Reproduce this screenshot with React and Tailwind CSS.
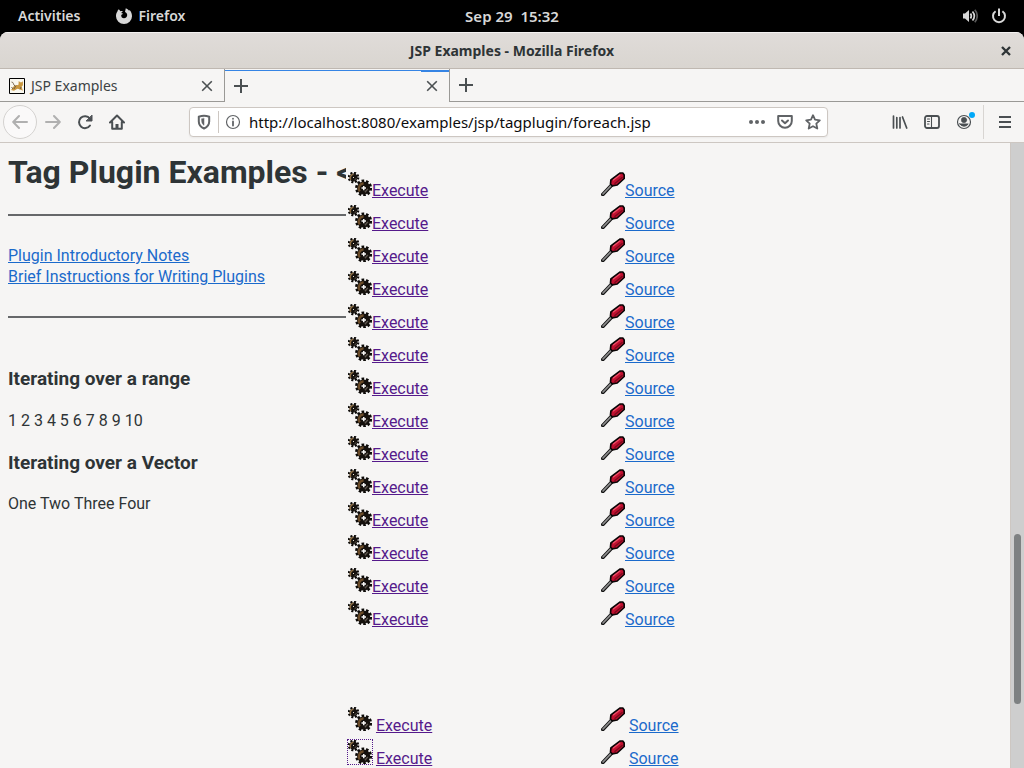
import React from 'react';

const executeRows = Array.from({ length: 14 }, (_, i) => i);

function Gear({ cx, cy, r, dash, fill }) {
  return (
    <g>
      <circle cx={cx} cy={cy} r={r - 1.3} fill="none" stroke="#0c0a08" strokeWidth="2.6" strokeDasharray={dash} />
      <circle cx={cx} cy={cy} r={r - 1.9} fill="#15110d" />
      <path d={`M${cx - r * 0.45} ${cy + r * 0.4}A${r * 0.6} ${r * 0.6} 0 0 1 ${cx} ${cy - r * 0.55}`} stroke={fill} strokeWidth={r * 0.27} fill="none" />
      <path d={`M${cx + r * 0.15} ${cy + r * 0.5}L${cx + r * 0.5} ${cy + r * 0.1}`} stroke="#5d564e" strokeWidth={r * 0.16} />
    </g>
  );
}

function Gears({ className = '' }) {
  return (
    <svg viewBox="0 0 24 24" className={`inline size-6 align-baseline ${className}`} aria-hidden="true">
      <Gear cx={5.5} cy={5.5} r={5.8} dash="1.9 1.630" fill="#8c6d43" />
      <Gear cx={15.6} cy={16} r={8.5} dash="2.6 1.925" fill="#6b4c29" />
      <path d="M15 14h1.500v1.300h1.500v1.500h-1.500V18.200H15v-1.400h-1.500v-1.500H15z" fill="#f6f5f4" />
      <path d="M5 5h1v1H5z" fill="#e8e0d2" />
    </svg>
  );
}

function Screwdriver() {
  return (
    <svg viewBox="0 0 24 24" className="inline size-6 align-baseline" aria-hidden="true">
      <path d="M1.800 22.500L11 12.800" stroke="#151515" strokeWidth="3.600" strokeLinecap="round" />
      <path d="M2 22L11 12.700" stroke="#8d8d8d" strokeWidth="1.700" strokeLinecap="round" />
      <path d="M19.200 1h2.600l1.400 2v3.500l-7 6.500-5 .8-1.700-1.800.4-4z" fill="#c01030" stroke="#0b0506" strokeWidth="1.700" strokeLinejoin="round" />
      <path d="M12 8.300l7.200-5.500" stroke="#ee5068" strokeWidth="1.300" />
      <path d="M13.500 11.800l8-6.500" stroke="#780a1c" strokeWidth="1.300" />
    </svg>
  );
}

function Cross({ className, width = 1.6 }) {
  return (
    <svg viewBox="0 0 12 12" className={className} aria-hidden="true">
      <path d="M1.2 1.2l9.6 9.6M10.8 1.2l-9.6 9.6" stroke="currentColor" strokeWidth={width} />
    </svg>
  );
}

function Plus() {
  return (
    <svg viewBox="0 0 14 14" className="size-[14px]" aria-hidden="true">
      <path d="M7 0v14M0 7h14" stroke="currentColor" strokeWidth="2" />
    </svg>
  );
}

function Icon({ children, className = 'size-4' }) {
  return (
    <svg viewBox="0 0 16 16" fill="none" stroke="currentColor" strokeWidth="2" strokeLinecap="round" strokeLinejoin="round" className={className} aria-hidden="true">
      {children}
    </svg>
  );
}

function TopBar() {
  return (
    <header className="grid h-8 shrink-0 grid-cols-3 items-center bg-black text-sm leading-5 font-semibold text-[#d8d8d8]">
      <div className="flex items-center pl-[18px]">
        <button type="button">Activities</button>
        <button type="button" className="ml-9 flex items-center gap-[6px]">
          <svg viewBox="0 0 16 16" className="size-4" aria-hidden="true">
            <path fill="currentColor" d="M2.800 1.300L4.500 3.200c.8-.3 1.600-.3 2.500 0-.9.4-1.500.9-1.700 1.800l1.900.8-2 1.200c-.2 2 1 3.300 2.800 3.300 1.900 0 3.200-1.400 3.200-3.200 0-1.500-.9-2.500-2.200-3.100L9.800.2c1.400.5 2.300 1.300 3 2.300l1-.3C15.300 3.900 16 5.800 16 8.200a8 7.700 0 0 1-16 0c0-2 .5-3.500 1.400-4.700.1-.9.600-1.700 1.400-2.200z" />
          </svg>
          Firefox
        </button>
      </div>
      <time className="text-center text-[15px] whitespace-pre">{'Sep 29  15:32'}</time>
      <div className="flex items-center justify-end gap-[13px] pr-[17px]">
        <button type="button" aria-label="Volume">
          <svg viewBox="0 0 16 16" className="size-4" fill="none" stroke="currentColor" aria-hidden="true">
            <path d="M1 5.500h2L7 2v12L3 10.500H1z" fill="currentColor" stroke="none" />
            <path d="M8.500 5.500c1 1.500 1 3.500 0 5" strokeWidth="1.700" />
            <path d="M10.500 3.500c2.300 2.800 2.300 6.200 0 9" strokeWidth="1.700" />
            <path d="M12.800 1.800c3.200 3.600 3.200 8.800 0 12.400" stroke="#5a5a5a" strokeWidth="1.700" />
          </svg>
        </button>
        <button type="button" aria-label="Power">
          <svg viewBox="0 0 16 16" className="size-4" fill="none" stroke="currentColor" strokeWidth="2" aria-hidden="true">
            <path d="M8 .5v7.500M4.600 3.200a6 6 0 1 0 6.800 0" />
          </svg>
        </button>
      </div>
    </header>
  );
}

function Tabs() {
  return (
    <div className="flex h-[33px] shrink-0 text-[#4b5052]">
      <div className="flex w-[225px] items-center border-r border-b border-[#9a9996] pt-px pr-[11px] pl-[9px]">
        <svg viewBox="0 0 16 16" className="size-4" aria-hidden="true">
          <path d="M.5.500h15v15H.500z" fill="#faf8f0" stroke="#000" />
          <path d="M2 12c1.500-1 1.500-3.500 4-4.500 1.500-.6 2.500-.2 3.500-.8l.2-3.700 1.500 1.300h1.500l1.200-1v4l-1.300 1.400 1.300 4-3-1.500-2.500-.5L5 12.700z" fill="#c9973f" />
          <path d="M2.500 4c2.500 0 1.500 3 3.500 4M4 11l-1.500-2M7 7.500L5 11M12 9l-1 2.500" stroke="#6c5b42" strokeWidth=".9" fill="none" />
        </svg>
        <span className="ml-[6px] flex-1 text-sm text-[#3d4345]">JSP Examples</span>
        <button type="button" aria-label="Close tab"><Cross className="size-3" /></button>
      </div>
      <div className="flex w-[224px] flex-col pt-px">
        <div className="flex h-[2px] items-start">
          <span className="h-px w-[196px] bg-[#3584e4]" />
          <span className="h-full flex-1 bg-[#3584e4]" />
        </div>
        <div className="flex h-[27px] items-center justify-between pr-[11px] pl-[9px]">
          <Plus />
          <button type="button" aria-label="Close tab"><Cross className="size-3" /></button>
        </div>
      </div>
      <div className="flex flex-1 items-center border-b border-l border-[#9a9996] pl-[9px]">
        <button type="button" aria-label="New tab"><Plus /></button>
      </div>
    </div>
  );
}

function Toolbar() {
  return (
    <div className="flex h-[41px] shrink-0 items-center border-b border-[#cdc7c2] pr-[11px] pl-[3px] text-[#4a4f52]">
      <button type="button" aria-label="Back" className="flex size-[34px] items-center justify-center rounded-full border border-[#d4d2d0] bg-[#faf9f9] text-[#b0b0b0]">
        <Icon><path d="M15 8H1.500M7 2L1.200 8 7 14" /></Icon>
      </button>
      <button type="button" aria-label="Forward" className="ml-2 text-[#b0b0b0]">
        <Icon><path d="M1 8h13.500M9 2l5.800 6L9 14" /></Icon>
      </button>
      <button type="button" aria-label="Reload" className="ml-4">
        <Icon><path d="M12.800 4.500A6 6 0 1 0 13 11.500" /><path d="M15 1.500V7H9.500z" fill="currentColor" strokeWidth="1" /></Icon>
      </button>
      <button type="button" aria-label="Home" className="ml-4">
        <Icon><path d="M1 8.500L8 1.500l7 7M3.200 8v6.800h9.600V8" /><path d="M8 14v-4" strokeWidth="3" strokeLinecap="butt" /></Icon>
      </button>
      <div className="ml-16 flex h-[30px] flex-1 items-center rounded border border-[#cdc7c2] bg-white pr-[6px] pl-[6px] text-[#606366] shadow-xs">
        <Icon><path d="M8 1.700c2 0 3.700.5 5.200 1.100v4.700c0 3.500-2.200 5.700-5.200 7-3-1.300-5.200-3.500-5.200-7V2.800C4.300 2.200 6 1.700 8 1.700z" /><path d="M8 4.500v6.800C6 9.800 5.600 8.500 5.600 5z" fill="currentColor" strokeWidth=".5" /></Icon>
        <span className="ml-[6px] h-[22px] w-px bg-[#cdc7c2]" />
        <Icon className="ml-[6px] size-4"><circle cx="8" cy="8" r="6.500" strokeWidth="1.200" /><path d="M8 7.500v4M8 4.700v.1" strokeWidth="1.800" /></Icon>
        <input aria-label="Address" type="text" defaultValue="http://localhost:8080/examples/jsp/tagplugin/foreach.jsp" className="ml-2 min-w-0 flex-1 bg-transparent text-[15px] leading-6 text-[#0c0c0d] outline-none" />
        <button type="button" aria-label="Page actions"><Icon><path d="M2 8h.01M8 8h.01M14 8h.01" strokeWidth="4" /></Icon></button>
        <button type="button" aria-label="Save to Pocket" className="ml-3"><Icon><path d="M1.200 2h13.600v5a6.800 6.800 0 0 1-13.600 0zM5 6.500l3 2.800 3-2.800" /></Icon></button>
        <button type="button" aria-label="Bookmark" className="ml-3"><Icon><path d="M8 1.200l2 4.500 4.800.6-3.500 3.300 1 4.900L8 12.200l-4.300 2.300 1-4.900L1.200 6.300 6 5.700z" strokeWidth="1.800" /></Icon></button>
      </div>
      <button type="button" aria-label="Library" className="ml-16"><Icon><path d="M1.500 2v12M4.800 3.500V14M8 3.500V14M10.500 3l4.200 11" strokeWidth="1.700" /></Icon></button>
      <button type="button" aria-label="Sidebar" className="ml-4"><Icon><rect x="1" y="2" width="14" height="12" rx="2" strokeWidth="1.800" /><path d="M7.500 2v12M3.500 5h2M3.500 7.500h2M3.500 10h1.500" strokeWidth="1.100" /></Icon></button>
      <button type="button" aria-label="Account" className="relative ml-4">
        <Icon><circle cx="8" cy="8" r="6.500" strokeWidth="1.200" /><circle cx="8" cy="6" r="2.700" fill="currentColor" strokeWidth=".5" /><path d="M3.800 10h8.400a5 5 0 0 1-8.400 0z" fill="currentColor" strokeWidth="1" /></Icon>
        <span className="absolute top-[-2px] right-[-3px] size-[6px] rounded-full bg-[#00a8f8]" />
      </button>
      <span className="ml-[11px] h-[34px] w-px bg-[#d8d5d2]" />
      <button type="button" aria-label="Menu" className="ml-[13px]"><Icon><path d="M2 3h12M2 8h12M2 13h12" strokeLinecap="butt" /></Icon></button>
    </div>
  );
}

function ExampleRow({ spaced = false, focused = false }) {
  return (
    <tr className="align-top">
      <td className="h-[33px] w-[253px] p-0 pl-[2px]">
        <a href="#execute" className="text-[#551a8b]">
          <Gears className={focused ? 'outline-1 outline-dotted outline-[#551a8b]' : ''} />
          {spaced && ' '}
          <span className="underline">Execute</span>
        </a>
      </td>
      <td className="h-[33px] p-0 pl-[2px]">
        <a href="#source" className="text-[#1b6acb]">
          <Screwdriver />
          {spaced && ' '}
          <span className="underline">Source</span>
        </a>
      </td>
    </tr>
  );
}

export default function App() {
  return (
    <div className="flex h-screen flex-col overflow-hidden bg-black font-['Noto_Sans',sans-serif]">
      <TopBar />
      <div className="flex min-h-0 flex-1 flex-col overflow-hidden rounded-t-lg bg-[#f6f5f4]">
        <div className="grid h-[37px] shrink-0 grid-cols-[1fr_auto_1fr] items-center border-t border-b border-t-[#f4f2f1] border-b-[#bfb8b1] bg-linear-to-b from-[#e0dcd9] to-[#d9d5d0] text-[#2e3436]">
          <h1 className="col-start-2 text-sm font-bold">JSP Examples - Mozilla Firefox</h1>
          <button type="button" aria-label="Close window" className="mr-[13px] justify-self-end"><Cross className="size-[10px]" width={2.8} /></button>
        </div>
        <Tabs />
        <Toolbar />
        <div className="flex min-h-0 flex-1 font-[Roboto,sans-serif] text-base leading-[21px] text-[#2e3436]">
          <main className="flex min-w-0 flex-1 overflow-hidden">
            <section className="w-[346px] shrink-0 overflow-hidden pl-2">
              <h1 className="mt-2 text-[32px] leading-[42px] font-bold whitespace-nowrap">Tag Plugin Examples - &lt;</h1>
              <hr className="mt-[21px] border-t-2 border-[#66686a]" />
              <nav className="mt-[29px] flex flex-col items-start text-[#1b6acb] underline">
                <a href="#notes">Plugin Introductory Notes</a>
                <a href="#instructions">Brief Instructions for Writing Plugins</a>
              </nav>
              <hr className="mt-[29px] border-t-2 border-[#66686a]" />
              <h3 className="mt-12 text-[19px] leading-[25px] font-bold">Iterating over a range</h3>
              <p className="mt-[19px]">1 2 3 4 5 6 7 8 9 10</p>
              <h3 className="mt-[19px] text-[19px] leading-[25px] font-bold">Iterating over a Vector</h3>
              <p className="mt-[18px]">One Two Three Four</p>
            </section>
            <section className="min-w-0 flex-1 pt-[29px]">
              <table className="w-full border-collapse">
                <tbody>{executeRows.map((i) => <ExampleRow key={i} />)}</tbody>
              </table>
              <table className="mt-[73px] w-full border-collapse">
                <tbody>
                  <ExampleRow spaced />
                  <ExampleRow spaced focused />
                </tbody>
              </table>
            </section>
          </main>
          <div className="grid w-[14px] shrink-0 grid-rows-[391fr_170fr_64fr] border-l border-[#cdc7c2] bg-[#cecece] px-[2px]">
            <div className="row-start-2 mx-px rounded-full bg-[#7e8182]" />
          </div>
        </div>
      </div>
    </div>
  );
}
